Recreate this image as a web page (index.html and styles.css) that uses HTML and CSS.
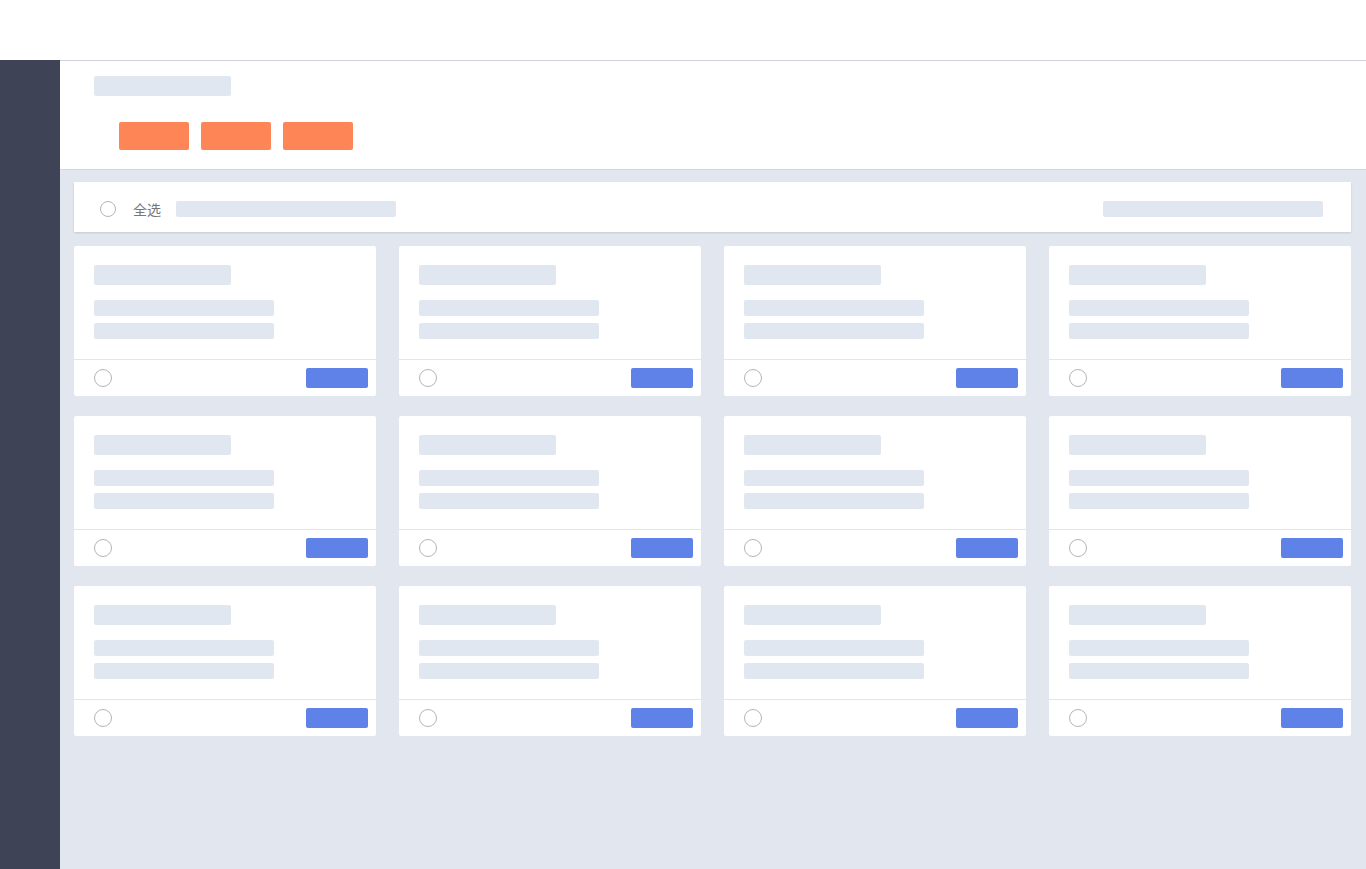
FILE: index.html
```html
<!DOCTYPE html>
<html lang="zh-CN">
<head>
    <meta charset="UTF-8">
    <meta name="viewport" content="width=device-width, initial-scale=1.0">
    <title>列表</title>
    <link rel="stylesheet" href="styles.css">
</head>
<body>
    <header class="top_bar"></header>
    <div class="layout">
        <aside class="side_nav"></aside>
        <main class="main">
            <section class="head_panel">
                <div class="ph ph_title"></div>
                <div class="btn_row">
                    <button class="btn_orange"></button>
                    <button class="btn_orange"></button>
                    <button class="btn_orange"></button>
                </div>
            </section>

            <div class="content">
                <div class="select_bar">
                    <span class="radio"></span>
                    <span class="select_label">全选</span>
                    <div class="ph ph_wide"></div>
                    <div class="ph ph_wide ph_right"></div>
                </div>

                <ul class="card_list" id="cardList"></ul>
            </div>
        </main>
    </div>

    <template id="cardTpl">
        <li class="card">
            <div class="card_body">
                <div class="ph ph_title"></div>
                <div class="ph ph_line"></div>
                <div class="ph ph_line"></div>
            </div>
            <div class="card_foot">
                <span class="radio radio_lg"></span>
                <button class="btn_blue"></button>
            </div>
        </li>
    </template>

    <script>
        // 카드 12개 생성
        const cardList = document.getElementById('cardList');
        const tpl = document.getElementById('cardTpl');
        for(let i = 0; i < 12; i++){
            cardList.appendChild(tpl.content.cloneNode(true));
        }
    </script>
</body>
</html>
```

FILE: styles.css
```css
* {
    margin: 0;
    padding: 0;
    box-sizing: border-box;
}

body {
    font-family: "Noto Sans CJK SC", "Noto Sans", sans-serif;
    background-color: #e1e6ef;
    height: 869px;
    overflow: hidden;
}

.top_bar {
    height: 60px;
    background-color: #fff;
}

.layout {
    display: flex;
    height: 809px;
}

.side_nav {
    width: 60px;
    background-color: #3e4356;
}

.main {
    flex: 1;
    display: flex;
    flex-direction: column;
}

/* 상단 패널 */
.head_panel {
    height: 110px;
    background-color: #fff;
    border-top: 1px solid #cfd2d8;
    border-bottom: 1px solid #d3d7de;
    padding: 15px 0 0 34px;
}

.ph {
    background-color: #e1e7f0;
    border-radius: 2px;
}

.ph_title {
    width: 137px;
    height: 20px;
}

.btn_row {
    display: flex;
    gap: 12px;
    margin: 26px 0 0 25px;
}

.btn_orange {
    width: 70px;
    height: 28px;
    border: none;
    border-radius: 2px;
    background-color: #fe8656;
}

.content {
    padding: 12px 15px 0 14px;
}

/* 전체선택 바 */
.select_bar {
    display: flex;
    align-items: center;
    height: 50px;
    padding: 4px 28px 0 26px;
    background-color: #fff;
    box-shadow: 0 1px 2px rgba(0, 0, 0, 0.12);
}

.radio {
    width: 16px;
    height: 16px;
    border: 1px solid #b5b5b5;
    border-radius: 50%;
    flex-shrink: 0;
}

.select_label {
    margin-left: 17px;
    font-size: 14px;
    color: #777;
}

.ph_wide {
    width: 220px;
    height: 16px;
    margin-left: 15px;
}

.ph_right {
    margin-left: auto;
}

/* 카드 목록 */
.card_list {
    display: grid;
    grid-template-columns: repeat(4, 302px);
    column-gap: 23px;
    row-gap: 20px;
    margin-top: 14px;
    list-style: none;
}

.card {
    height: 150px;
    background-color: #fff;
    border-radius: 2px;
    display: flex;
    flex-direction: column;
}

.card_body {
    height: 114px;
    padding: 19px 0 0 20px;
    border-bottom: 1px solid #e3e5e8;
}

.ph_line {
    width: 180px;
    height: 16px;
    margin-bottom: 7px;
}

.card_body .ph_title {
    margin-bottom: 15px;
}

.card_foot {
    flex: 1;
    display: flex;
    align-items: center;
    justify-content: space-between;
    padding: 0 8px 0 20px;
}

.radio_lg {
    width: 18px;
    height: 18px;
}

.btn_blue {
    width: 62px;
    height: 20px;
    border: none;
    border-radius: 2px;
    background-color: #5e82e8;
}
```
